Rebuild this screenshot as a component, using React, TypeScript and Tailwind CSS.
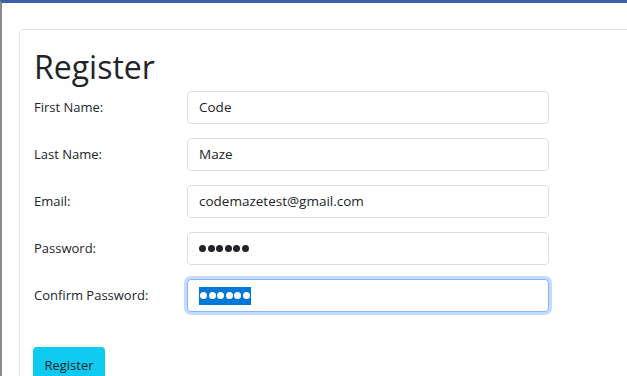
import React from "react";

const font = { fontFamily: '"Open Sans", "Noto Sans", "Liberation Sans", sans-serif' };

function Dots({ white }: { white?: boolean }) {
  return (
    <div className="flex gap-[1.5px]">
      {[0, 1, 2, 3, 4, 5].map((i) => (
        <span
          key={i}
          className={
            white
              ? "w-[7px] h-[7px] rounded-full bg-white"
              : "w-[7px] h-[7px] rounded-full bg-[#212529]"
          }
        />
      ))}
    </div>
  );
}

function Row({ label, children, focused }: { label: string; children: React.ReactNode; focused?: boolean }) {
  return (
    <div className="flex items-center h-[33px]">
      <div className="w-[153px] text-[13px] text-[#212529] pt-[1px]">{label}</div>
      <div
        className={
          focused
            ? "w-[362px] h-[33px] rounded-[4px] border border-[#86b7fe] shadow-[0_0_0_3px_rgba(13,110,253,0.25)] bg-white flex items-center pl-[11px] text-[13.5px] text-[#212529]"
            : "w-[362px] h-[33px] rounded-[4px] border border-[#dbdfe4] bg-white flex items-center pl-[11px] text-[13.5px] text-[#212529]"
        }
      >
        {children}
      </div>
    </div>
  );
}

export default function App() {
  return (
    <div
      className="w-[627px] h-[376px] overflow-hidden bg-white border-t-[3px] border-t-[#3d5ea9] border-l-2 border-l-[#8a8a8a] pl-[17px] pt-[26px]"
      style={font}
    >
      <div className="w-[700px] h-[400px] border border-[#e3e5e8] rounded-[5px] pl-[14px] pt-[17px]">
        <h1 className="text-[32px] leading-[40px] text-[#212529] font-normal">Register</h1>
        <div className="flex flex-col gap-[14px] mt-[4px]">
          <Row label="First Name:">Code</Row>
          <Row label="Last Name:">Maze</Row>
          <Row label="Email:">codemazetest@gmail.com</Row>
          <Row label="Password:">
            <Dots />
          </Row>
          <Row label="Confirm Password:" focused>
            <div className="bg-[#0078d7] h-[18px] flex items-center px-[1px]">
              <Dots white />
            </div>
          </Row>
        </div>
        <button className="mt-[35px] w-[72px] h-[36px] bg-[#0dcaf0] rounded-[4px] text-[13px] text-[#212529] -ml-[1px] pt-[2px]">
          Register
        </button>
      </div>
    </div>
  );
}
